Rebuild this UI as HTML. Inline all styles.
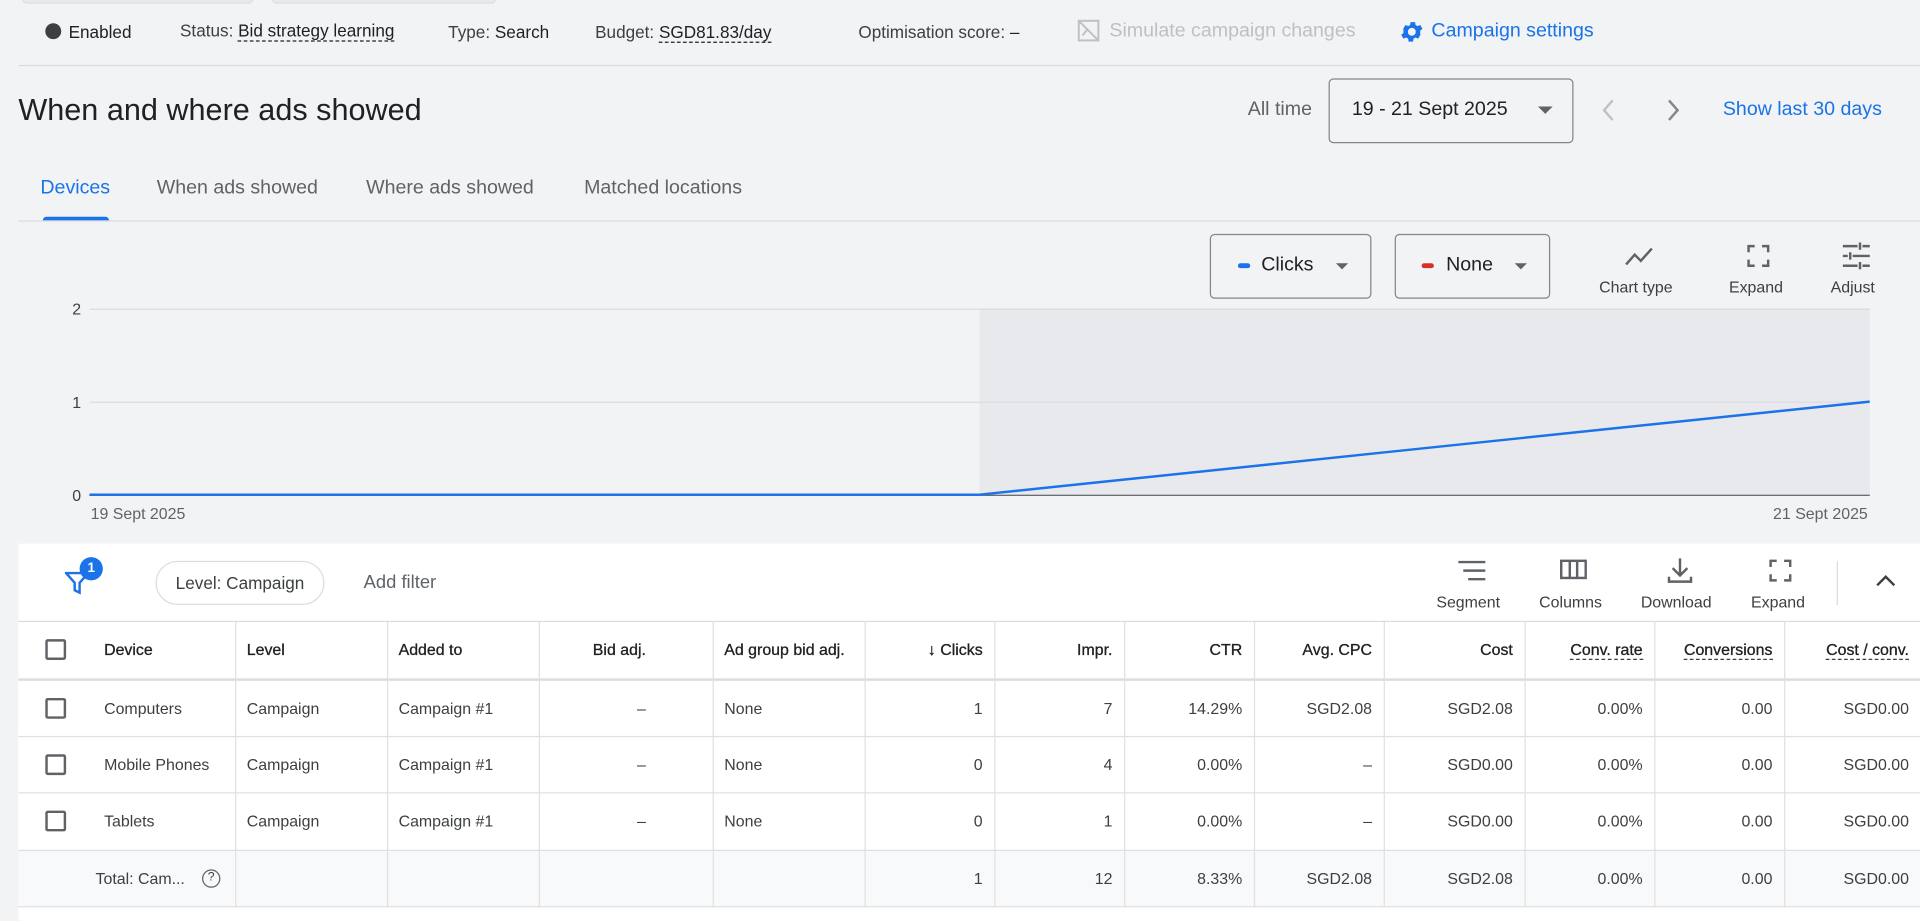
<!DOCTYPE html>
<html><head><meta charset="utf-8"><style>
*{box-sizing:border-box;margin:0;padding:0}
html,body{width:1920px;height:921px;overflow:hidden;background:#f1f3f4}
#w{width:1568px;height:752px;transform:scale(1.22449);transform-origin:0 0;position:relative;font-family:"Liberation Sans",Arial,sans-serif;color:#3c4043;font-size:14px}
.a{position:absolute;white-space:nowrap}
.dot{border-bottom:1px dashed #202124}
table{border-collapse:collapse;position:absolute;left:15px;top:508px;width:1553px;background:#fff;font-size:13px;table-layout:fixed}
td,th{height:46.5px;border-right:1px solid #e0e0e0;border-bottom:1px solid #e0e0e0;padding:0 9px;text-align:right;color:#3c4043;font-weight:normal;white-space:nowrap;overflow:hidden;vertical-align:middle}
th{color:#202124;font-weight:normal;border-bottom:2px solid #dadce0;-webkit-text-stroke:0.25px #202124}
td.l,th.l{text-align:left}
tr.t td{background:#f8f9fa}
.cb{display:inline-block;width:17px;height:17px;border:2px solid #5f6368;border-radius:2px;vertical-align:middle}
.m{vertical-align:middle}
.u{border-bottom:1px dashed #3c4043}
</style></head><body><div id="w">
<div class="a" style="left:18px;top:-6px;width:189px;height:9px;background:#e8eaed;border-radius:4px;border:1px solid #dadce0"></div>
<div class="a" style="left:222px;top:-6px;width:183px;height:9px;background:#e8eaed;border-radius:4px;border:1px solid #dadce0"></div>
<div class="a" style="left:37px;top:19px;width:13px;height:13px;border-radius:50%;background:#3c4043"></div>
<div class="a" style="left:56px;top:18px;color:#202124">Enabled</div>
<div class="a" style="left:147px;top:17px">Status: <span class="dot" style="color:#202124">Bid strategy learning</span></div>
<div class="a" style="left:366px;top:18px">Type: <span style="color:#202124">Search</span></div>
<div class="a" style="left:486px;top:18px">Budget: <span class="dot" style="color:#202124">SGD81.83/day</span></div>
<div class="a" style="left:701px;top:18px">Optimisation score: <span style="color:#202124">–</span></div>
<svg class="a" style="left:879px;top:15px" width="20" height="20" viewBox="0 0 20 20" fill="none" stroke="#bdc1c6" stroke-width="1.6"><rect x="2" y="2" width="16" height="16"/><path d="M2 2L18 18M5 14l4-5 3 3"/></svg>
<div class="a" style="left:906px;top:17px;color:#bdc1c6;font-size:16px">Simulate campaign changes</div>
<svg class="a" style="left:1142px;top:15px" width="22" height="22" viewBox="0 0 24 24"><path fill="#1a73e8" d="M19.4 13a7.5 7.5 0 000-2l2.1-1.6-2-3.5-2.5 1a7 7 0 00-1.7-1l-.4-2.6h-4l-.4 2.6a7 7 0 00-1.7 1l-2.5-1-2 3.5L4.6 11a7.5 7.5 0 000 2l-2.1 1.6 2 3.5 2.5-1a7 7 0 001.7 1l.4 2.6h4l.4-2.6a7 7 0 001.7-1l2.5 1 2-3.5zM12 15.5a3.5 3.5 0 110-7 3.5 3.5 0 010 7z"/></svg>
<div class="a" style="left:1169px;top:17px;color:#1a73e8;font-size:16px">Campaign settings</div>
<div class="a" style="left:15px;top:53px;width:1553px;height:1px;background:#dadce0"></div>
<div class="a" style="left:15px;top:76px;font-size:25px;color:#202124">When and where ads showed</div>
<div class="a" style="left:1019px;top:81px;font-size:16px;color:#5f6368">All time</div>
<div class="a" style="left:1085px;top:64px;width:200px;height:53px;border:1px solid #80868b;border-radius:4px"></div>
<div class="a" style="left:1104px;top:81px;font-size:16px;color:#202124">19 - 21 Sept 2025</div>
<div class="a" style="left:1256px;top:87px;border:6px solid transparent;border-top-color:#5f6368;border-bottom:0"></div>
<svg class="a" style="left:1304px;top:80px" width="20" height="20" viewBox="0 0 20 20"><path d="M13 2l-7 8 7 8" fill="none" stroke="#bdc1c6" stroke-width="2"/></svg>
<svg class="a" style="left:1356px;top:80px" width="20" height="20" viewBox="0 0 20 20"><path d="M7 2l7 8-7 8" fill="none" stroke="#80868b" stroke-width="2"/></svg>
<div class="a" style="left:1407px;top:81px;font-size:16px;color:#1a73e8">Show last 30 days</div>
<div class="a" style="left:33px;top:145px;font-size:16px;color:#1a73e8">Devices</div>
<div class="a" style="left:128px;top:145px;font-size:16px;color:#5f6368">When ads showed</div>
<div class="a" style="left:299px;top:145px;font-size:16px;color:#5f6368">Where ads showed</div>
<div class="a" style="left:477px;top:145px;font-size:16px;color:#5f6368">Matched locations</div>
<div class="a" style="left:35px;top:177px;width:54px;height:3px;background:#1a73e8;border-radius:3px 3px 0 0"></div>
<div class="a" style="left:15px;top:180px;width:1553px;height:1px;background:#dadce0"></div>
<div class="a" style="left:988px;top:191px;width:132px;height:53px;border:1px solid #80868b;border-radius:4px"></div>
<div class="a" style="left:1011px;top:215px;width:10px;height:4px;border-radius:2px;background:#1a73e8"></div>
<div class="a" style="left:1030px;top:208px;font-size:16px;color:#202124">Clicks</div>
<div class="a" style="left:1091px;top:215px;border:5px solid transparent;border-top-color:#5f6368;border-bottom:0"></div>
<div class="a" style="left:1139px;top:191px;width:127px;height:53px;border:1px solid #80868b;border-radius:4px"></div>
<div class="a" style="left:1161px;top:215px;width:10px;height:4px;border-radius:2px;background:#d93025"></div>
<div class="a" style="left:1181px;top:208px;font-size:16px;color:#202124">None</div>
<div class="a" style="left:1237px;top:215px;border:5px solid transparent;border-top-color:#5f6368;border-bottom:0"></div>
<svg class="a" style="left:1327px;top:199px" width="24" height="20" viewBox="0 0 24 20"><path d="M1 17l7-8 5 5 9-10" fill="none" stroke="#5f6368" stroke-width="2"/></svg>
<div class="a" style="left:1306px;top:227px;font-size:13px">Chart type</div>
<svg class="a" style="left:1426px;top:199px" width="20" height="20" viewBox="0 0 20 20" fill="none" stroke="#5f6368" stroke-width="2"><path d="M2 7V2h5M13 2h5v5M18 13v5h-5M7 18H2v-5"/></svg>
<div class="a" style="left:1412px;top:227px;font-size:13px">Expand</div>
<svg class="a" style="left:1504px;top:198px" width="24" height="22" viewBox="0 0 24 22" fill="none" stroke="#5f6368" stroke-width="2"><path d="M1 3h12M17 3h6M15 0v6M1 11h4M9 11h14M7 8v6M1 19h12M17 19h6M15 16v6"/></svg>
<div class="a" style="left:1495px;top:227px;font-size:13px">Adjust</div>
<div class="a" style="left:800px;top:252px;width:727px;height:152px;background:#e8e9ec"></div>
<div class="a" style="left:73px;top:252px;width:1454px;height:1px;background:#dadce0"></div>
<div class="a" style="left:73px;top:328px;width:1454px;height:1px;background:#dadce0"></div>
<div class="a" style="left:73px;top:404px;width:1454px;height:1px;background:#5f6368"></div>
<div class="a" style="left:59px;top:245px;font-size:13px">2</div>
<div class="a" style="left:59px;top:321px;font-size:13px">1</div>
<div class="a" style="left:59px;top:397px;font-size:13px">0</div>
<svg class="a" style="left:73px;top:252px" width="1454" height="154"><polyline points="0,152 727,152 1454,76" fill="none" stroke="#1a73e8" stroke-width="2"/></svg>
<div class="a" style="left:74px;top:412px;font-size:13px;color:#5f6368">19 Sept 2025</div>
<div class="a" style="left:1448px;top:412px;font-size:13px;color:#5f6368">21 Sept 2025</div>
<div class="a" style="left:15px;top:444px;width:1553px;height:308px;background:#fff"></div>
<svg class="a" style="left:53px;top:462px" width="20" height="24" viewBox="0 0 20 24"><path d="M1 6h18l-7 8v8l-4-2v-6z" fill="none" stroke="#1a73e8" stroke-width="2"/></svg>
<div class="a" style="left:65px;top:455px;width:19px;height:19px;border-radius:50%;background:#1a73e8;color:#fff;font-size:11px;text-align:center;line-height:19px;font-weight:bold">1</div>
<div class="a" style="left:127px;top:458px;width:138px;height:36px;border:1px solid #dadce0;border-radius:18px;text-align:center;line-height:34px;color:#3c4043">Level: Campaign</div>
<div class="a" style="left:297px;top:467px;font-size:15px;color:#5f6368">Add filter</div>
<svg class="a" style="left:1190px;top:457px" width="24" height="18" fill="none" stroke="#5f6368" stroke-width="2"><path d="M1 2h22M5 9h18M9 16h14"/></svg>
<div class="a" style="left:1173px;top:484px;font-size:13px">Segment</div>
<svg class="a" style="left:1274px;top:456px" width="22" height="18" fill="none" stroke="#5f6368" stroke-width="2"><rect x="1" y="2" width="20" height="14"/><path d="M8 2v14M14 2v14"/></svg>
<div class="a" style="left:1257px;top:484px;font-size:13px">Columns</div>
<svg class="a" style="left:1361px;top:455px" width="22" height="22" fill="none" stroke="#5f6368" stroke-width="2"><path d="M11 1v13M5 9l6 6 6-6M2 16v4h18v-4"/></svg>
<div class="a" style="left:1340px;top:484px;font-size:13px">Download</div>
<svg class="a" style="left:1444px;top:456px" width="20" height="20" fill="none" stroke="#5f6368" stroke-width="2"><path d="M2 7V2h5M13 2h5v5M18 13v5h-5M7 18H2v-5"/></svg>
<div class="a" style="left:1430px;top:484px;font-size:13px">Expand</div>
<div class="a" style="left:1500px;top:458px;width:1px;height:36px;background:#dadce0"></div>
<svg class="a" style="left:1531px;top:468px" width="18" height="12" fill="none" stroke="#3c4043" stroke-width="2"><path d="M2 10l7-7 7 7"/></svg>
<div class="a" style="left:15px;top:507px;width:1553px;height:1px;background:#dadce0"></div>
<table>
<colgroup><col style="width:177px"><col style="width:124px"><col style="width:124px"><col style="width:142px"><col style="width:124px"><col style="width:106px"><col style="width:106px"><col style="width:106px"><col style="width:106px"><col style="width:115px"><col style="width:106px"><col style="width:106px"><col style="width:111px"></colgroup>
<tr><th class="l" style="padding-left:22px"><span class="cb"></span><span class="m" style="margin-left:31px">Device</span></th><th class="l">Level</th><th class="l">Added to</th><th style="padding-right:54px">Bid adj.</th><th class="l">Ad group bid adj.</th><th>↓ Clicks</th><th>Impr.</th><th>CTR</th><th>Avg. CPC</th><th>Cost</th><th><span class="u">Conv. rate</span></th><th><span class="u">Conversions</span></th><th style="border-right:0"><span class="u">Cost / conv.</span></th></tr>
<tr><td class="l" style="padding-left:22px"><span class="cb"></span><span class="m" style="margin-left:31px">Computers</span></td><td class="l">Campaign</td><td class="l">Campaign #1</td><td style="padding-right:54px">–</td><td class="l">None</td><td>1</td><td>7</td><td>14.29%</td><td>SGD2.08</td><td>SGD2.08</td><td>0.00%</td><td>0.00</td><td style="border-right:0">SGD0.00</td></tr>
<tr><td class="l" style="padding-left:22px"><span class="cb"></span><span class="m" style="margin-left:31px">Mobile Phones</span></td><td class="l">Campaign</td><td class="l">Campaign #1</td><td style="padding-right:54px">–</td><td class="l">None</td><td>0</td><td>4</td><td>0.00%</td><td>–</td><td>SGD0.00</td><td>0.00%</td><td>0.00</td><td style="border-right:0">SGD0.00</td></tr>
<tr><td class="l" style="padding-left:22px"><span class="cb"></span><span class="m" style="margin-left:31px">Tablets</span></td><td class="l">Campaign</td><td class="l">Campaign #1</td><td style="padding-right:54px">–</td><td class="l">None</td><td>0</td><td>1</td><td>0.00%</td><td>–</td><td>SGD0.00</td><td>0.00%</td><td>0.00</td><td style="border-right:0">SGD0.00</td></tr>
<tr class="t"><td class="l" style="padding-left:63px"><span class="m">Total: Cam...</span><span class="m" style="display:inline-block;width:15px;height:15px;border:1.5px solid #5f6368;border-radius:50%;font-size:10px;text-align:center;line-height:12px;margin-left:14px">?</span></td><td></td><td></td><td></td><td></td><td>1</td><td>12</td><td>8.33%</td><td>SGD2.08</td><td>SGD2.08</td><td>0.00%</td><td>0.00</td><td style="border-right:0">SGD0.00</td></tr>
</table>
</div></body></html>
